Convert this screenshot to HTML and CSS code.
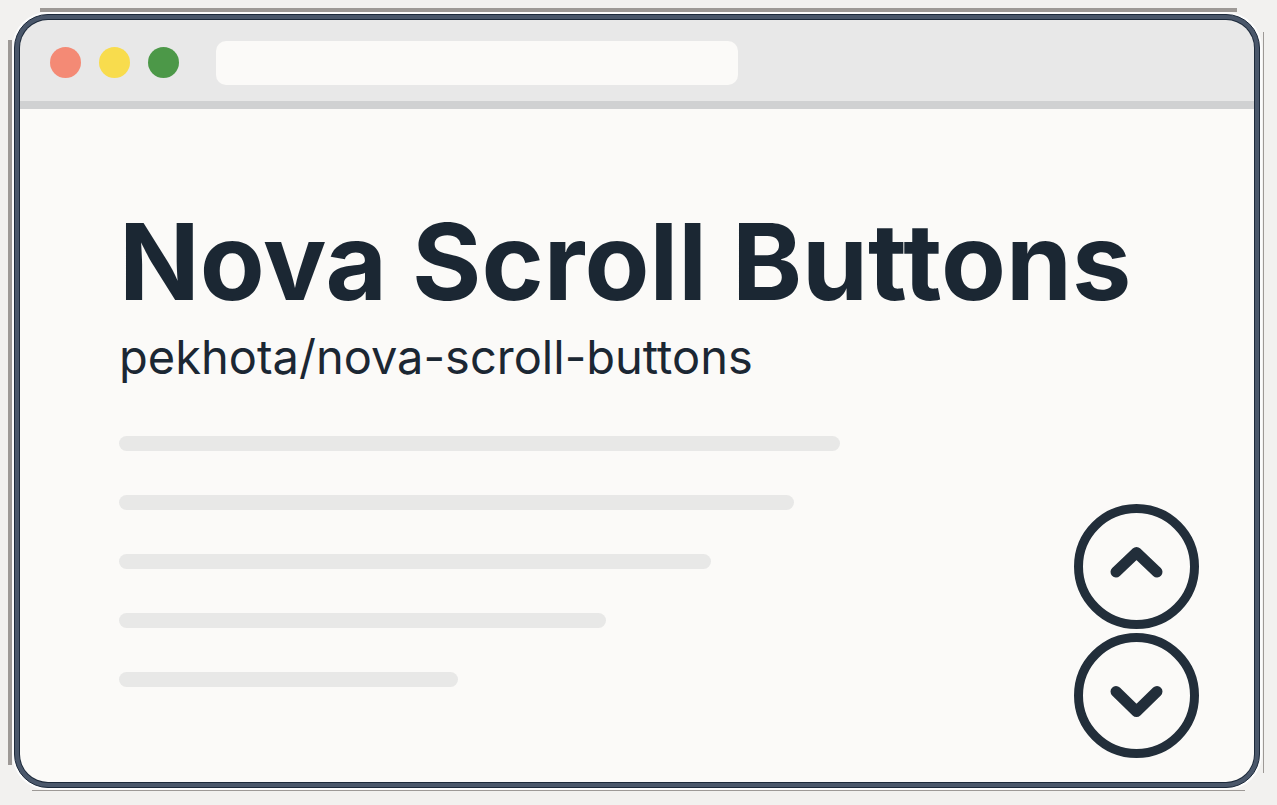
FILE: index.html
```html
<!DOCTYPE html>
<html lang="en">
<head>
<meta charset="utf-8">
<title>Nova Scroll Buttons</title>
<link rel="stylesheet" href="styles.css">
</head>
<body>
<div class="window">
  <header class="toolbar">
    <span class="dot dot-close"></span>
    <span class="dot dot-minimize"></span>
    <span class="dot dot-zoom"></span>
    <input class="address" type="text" aria-label="Address">
  </header>
  <main class="content">
    <h1 class="title">Nova Scroll Buttons</h1>
    <p class="repo">pekhota/nova-scroll-buttons</p>
    <div class="lines">
      <div class="line line-1"></div>
      <div class="line line-2"></div>
      <div class="line line-3"></div>
      <div class="line line-4"></div>
      <div class="line line-5"></div>
    </div>
    <nav class="scroll-buttons" aria-label="Scroll">
      <button class="scroll-button" type="button" aria-label="Scroll up">
        <svg class="chevron" viewBox="0 0 60 60"><path d="M9 35 29.500 15.500 50 35"/></svg>
      </button>
      <button class="scroll-button" type="button" aria-label="Scroll down">
        <svg class="chevron" viewBox="0 0 60 60"><path d="M9 25.500 29.500 45.500 50 25.500"/></svg>
      </button>
    </nav>
  </main>
</div>
</body>
</html>
```
FILE: styles.css
```css
* {
  box-sizing: border-box;
}

/* Grey strips behind the window edges, stopping short of the corners */
body {
  margin: 0;
  min-height: 100vh;
  padding: 14px 17px 17px 14px;
  display: flex;
  background:
    linear-gradient(#9d9996, #9d9996) 40px 8px / calc(100% - 80px) 4px no-repeat,
    linear-gradient(#9d9996, #9d9996) 8px 40px / 4px calc(100% - 80px) no-repeat,
    linear-gradient(#9d9996, #9d9996) calc(100% - 13px) 32px / 1px calc(100% - 64px) no-repeat,
    linear-gradient(#9d9996, #9d9996) 32px calc(100% - 14px) / calc(100% - 64px) 1px no-repeat,
    #f2f1ef;
  color: #1b2733;
  font-family: Inter, "Liberation Sans", sans-serif;
}

.window {
  flex: 1;
  display: flex;
  flex-direction: column;
  border: 1px solid #1c293a;
  border-radius: 34px;
  padding: 5px;
  background: #4a576a;
  box-shadow: 0 0 0 2px #fcfcfc;
}

.toolbar {
  display: flex;
  align-items: center;
  gap: 18px;
  height: 89px;
  padding: 4px 30px 0;
  background: #e8e8e8;
  border-bottom: 8px solid #d0d1d2;
  border-radius: 28px 28px 0 0;
  box-shadow: 0 0 0 1px #1c293a;
}

.dot {
  width: 31px;
  height: 31px;
  border-radius: 50%;
}

.dot-close {
  background: #f48a75;
}

.dot-minimize {
  background: #f8dc4d;
}

.dot-zoom {
  background: #4c9848;
}

.address {
  width: 522px;
  height: 44px;
  margin-left: 19px;
  border: 0;
  border-radius: 10px;
  background: #fbfaf8;
}

.content {
  position: relative;
  flex: 1;
  padding: 88px 99px 0;
  background: #fbfaf8;
  border-radius: 0 0 28px 28px;
  box-shadow: 0 1px 0 1px #1c293a;
  clip-path: inset(0 -1px -1px -1px round 0 0 29px 29px);
}

.title {
  margin: 0;
  font-size: 106px;
  line-height: 130px;
  font-weight: 700;
  white-space: nowrap;
}

.repo {
  margin: 0;
  font-size: 47px;
  line-height: 60px;
  font-weight: 400;
  white-space: nowrap;
}

.lines {
  display: grid;
  gap: 44px;
  margin-top: 49px;
}

.line {
  height: 15px;
  border-radius: 8px;
  background: #e8e8e7;
}

.line-1 {
  width: 69.600%;
}

.line-2 {
  width: 65.200%;
}

.line-3 {
  width: 57.100%;
}

.line-4 {
  width: 47%;
}

.line-5 {
  width: 32.700%;
}

.scroll-buttons {
  position: absolute;
  right: 55px;
  bottom: 24px;
  display: grid;
  gap: 4px;
}

.scroll-button {
  display: grid;
  place-items: center;
  width: 125px;
  height: 125px;
  padding: 0;
  border: 9px solid #222e3a;
  border-radius: 50%;
  background: #fbfaf8;
  color: #222e3a;
}

.chevron {
  width: 60px;
  height: 60px;
  fill: none;
  stroke: currentColor;
  stroke-width: 11;
  stroke-linecap: round;
  stroke-linejoin: round;
}
```
